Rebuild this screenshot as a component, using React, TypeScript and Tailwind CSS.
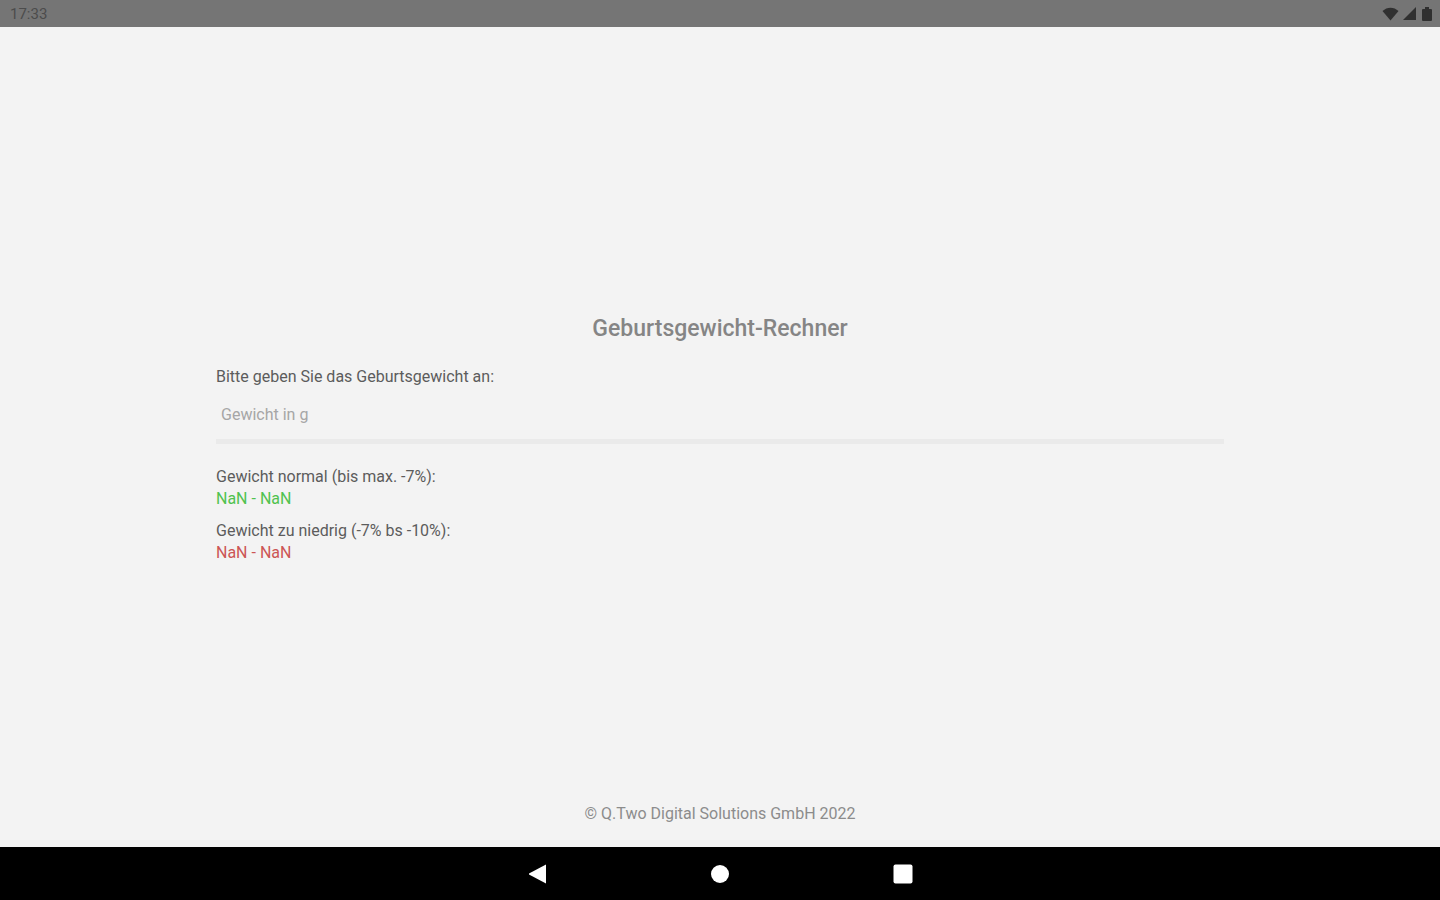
import { useState } from "react";

const ranges = [
  { title: "Gewicht normal (bis max. -7%):", from: 1, to: 0.93, color: "text-[#4fc24f]" },
  { title: "Gewicht zu niedrig (-7% bs -10%):", from: 0.93, to: 0.9, color: "text-[#cc5555]" },
];

function StatusBar() {
  return (
    <header className="flex h-[27px] items-center justify-between bg-[#757575] pr-2 pl-[10px] text-[#4c4c4c]">
      <span className="text-[15px]">17:33</span>
      <div className="flex items-center gap-1 text-[#303030]">
        <svg width="17" height="14" viewBox="0 0 17 14" fill="currentColor" aria-hidden="true">
          <path d="M0.5 4C5 -0.5 12 -0.5 16.5 4L8.5 13.5Z" />
        </svg>
        <svg width="13" height="13" viewBox="0 0 13 13" fill="currentColor" aria-hidden="true">
          <path d="M13 0V13H0Z" />
        </svg>
        <svg className="ml-[2px]" width="10" height="14" viewBox="0 0 10 14" fill="currentColor" aria-hidden="true">
          <path d="M3 0H7V2H9Q10 2 10 3V13Q10 14 9 14H1Q0 14 0 13V3Q0 2 1 2H3Z" />
        </svg>
      </div>
    </header>
  );
}

function NavigationBar() {
  return (
    <nav className="flex h-[53px] items-center justify-center gap-[163px] bg-black text-white">
      <button type="button" aria-label="Zurück">
        <svg width="20" height="20" viewBox="0 0 20 20" fill="currentColor">
          <path d="M19 0.5V19.5L2 10.5V9.5Z" />
        </svg>
      </button>
      <button type="button" aria-label="Startseite">
        <svg width="20" height="20" viewBox="0 0 20 20" fill="currentColor">
          <circle cx="10" cy="10" r="9" />
        </svg>
      </button>
      <button type="button" aria-label="Übersicht">
        <svg width="20" height="20" viewBox="0 0 20 20" fill="currentColor">
          <rect x="0.5" y="0.5" width="19" height="19" rx="2" />
        </svg>
      </button>
    </nav>
  );
}

export default function App() {
  const [weight, setWeight] = useState("");
  const grams = parseFloat(weight);

  return (
    <div className="flex min-h-screen flex-col bg-[#f3f3f3] font-['Roboto',sans-serif] text-base leading-[22px] text-[#5c5c5c]">
      <StatusBar />

      <main className="grid flex-1 grid-rows-[1fr_auto_1fr]">
        <section className="row-start-2 mx-auto w-7/10 pt-[3px]">
          <h1 className="text-center text-[23px] leading-8 font-medium text-[#858585]">Geburtsgewicht-Rechner</h1>

          <label htmlFor="weight" className="mt-[21px] block">
            Bitte geben Sie das Geburtsgewicht an:
          </label>
          <input
            id="weight"
            type="text"
            inputMode="numeric"
            placeholder="Gewicht in g"
            value={weight}
            onChange={(e) => setWeight(e.target.value)}
            className="block h-14 w-full border-b-5 border-[#eaeaea] px-[5px] pt-[2px] outline-none placeholder:text-[#a6a6a6]"
          />

          <dl className="mt-[22px] flex flex-col gap-[10px]">
            {ranges.map((range) => (
              <div key={range.title}>
                <dt>{range.title}</dt>
                <dd className={range.color}>
                  {Math.round(grams * range.from)} - {Math.round(grams * range.to)}
                </dd>
              </div>
            ))}
          </dl>
        </section>

        <footer className="row-start-3 self-end pb-[22px] text-center text-[#8c8c8c]">
          © Q.Two Digital Solutions GmbH 2022
        </footer>
      </main>

      <NavigationBar />
    </div>
  );
}
